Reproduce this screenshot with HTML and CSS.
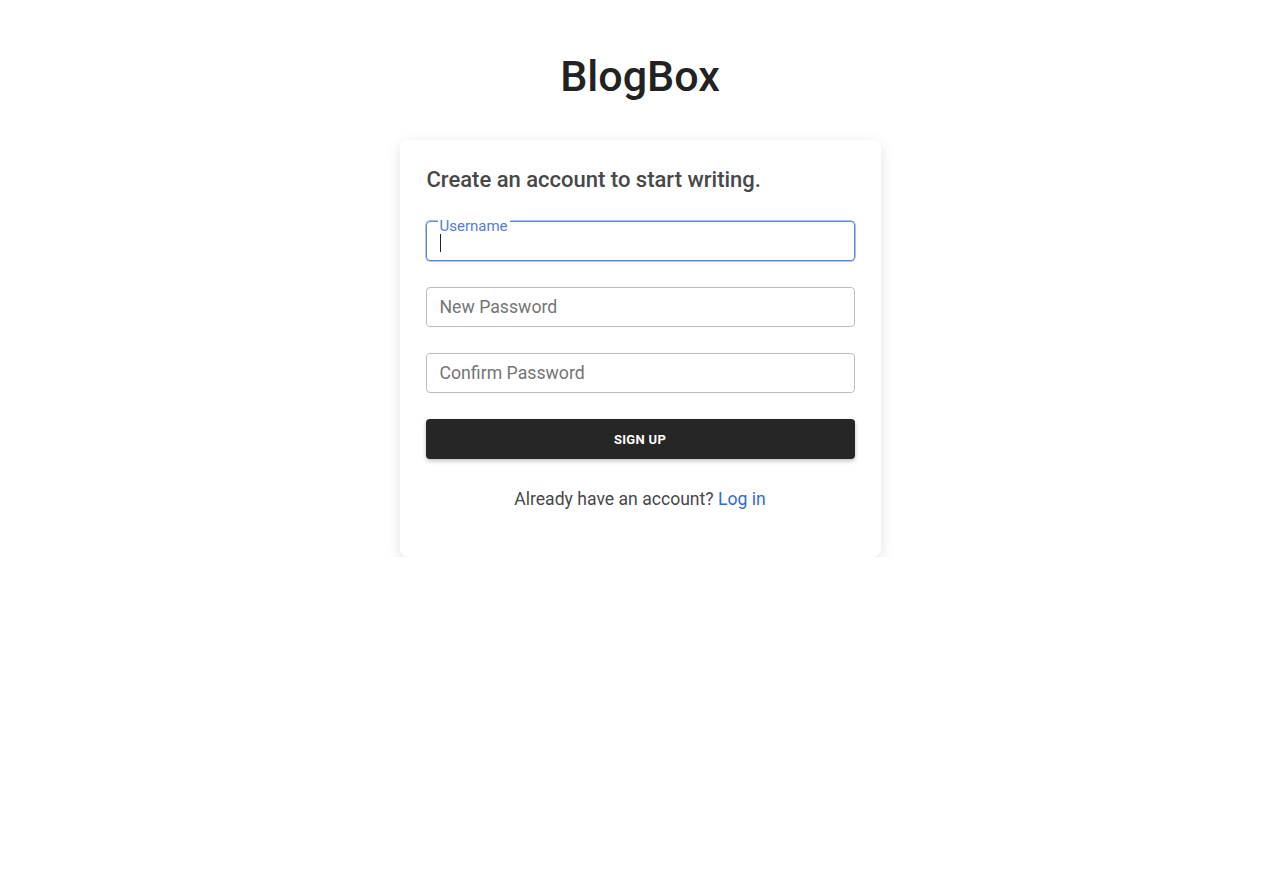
FILE: index.html
```html
<!DOCTYPE html>
<html>
<head>
<meta charset="utf-8">
<link rel="stylesheet" href="styles.css">
</head>
<body>
<main class="page">
  <h1 class="brand">BlogBox</h1>
  <section class="card">
    <h2 class="intro">Create an account to start writing.</h2>
    <div class="field field-focused">
      <span class="float-label">Username</span>
      <span class="caret"></span>
    </div>
    <div class="field"><span class="placeholder">New Password</span></div>
    <div class="field"><span class="placeholder">Confirm Password</span></div>
    <button class="submit">SIGN UP</button>
    <p class="switch">Already have an account? <a class="link" href="#">Log in</a></p>
  </section>
</main>
</body>
</html>
```
FILE: styles.css
```css
html, body {
  margin: 0;
  padding: 0;
  background: #fff;
  font-family: Roboto, "Liberation Sans", sans-serif;
}
.page {
  display: flex;
  flex-direction: column;
  align-items: center;
}
.brand {
  margin: 50px 0 0;
  font-size: 43px;
  line-height: 52px;
  font-weight: 500;
  color: #222;
}
.card {
  margin-top: 38px;
  width: 481px;
  box-sizing: border-box;
  padding: 26px 26px 47px;
  border-radius: 8px;
  background: #fff;
  box-shadow: 0 4px 14px rgba(0,0,0,0.12);
  display: flex;
  flex-direction: column;
}
.intro {
  margin: 1px 0 28px;
  font-size: 22px;
  line-height: 26px;
  font-weight: 500;
  color: #484848;
  padding-left: 1px;
}
.field {
  position: relative;
  height: 38px;
  border: 1px solid #bdbdbd;
  border-radius: 4px;
  margin-bottom: 26px;
  display: flex;
  align-items: center;
  padding-left: 13px;
}
.field-focused {
  border-color: #5b87d6;
  box-shadow: 0 0 0 0.5px #5b87d6;
}
.float-label {
  position: absolute;
  left: 11px;
  top: -4px;
  padding: 0 2px;
  background: #fff;
  font-size: 15px;
  line-height: 16px;
  color: #4f7fd2;
}
.caret {
  display: block;
  width: 1px;
  height: 19px;
  background: #222;
  margin-top: 2px;
}
.placeholder {
  font-size: 17.7px;
  color: #757575;
}
.submit {
  height: 40px;
  border: none;
  border-radius: 4px;
  background: #262626;
  color: #fff;
  font-family: Roboto, "Liberation Sans", sans-serif;
  font-size: 13px;
  font-weight: 700;
  letter-spacing: 0.3px;
  box-shadow: 0 2px 4px rgba(0,0,0,0.25);
  margin-top: 0;
}
.switch {
  margin: 29px 0 0;
  text-align: center;
  font-size: 17.6px;
  line-height: 22px;
  color: #484848;
}
.link {
  color: #2f6bd8;
  text-decoration: none;
}
```
